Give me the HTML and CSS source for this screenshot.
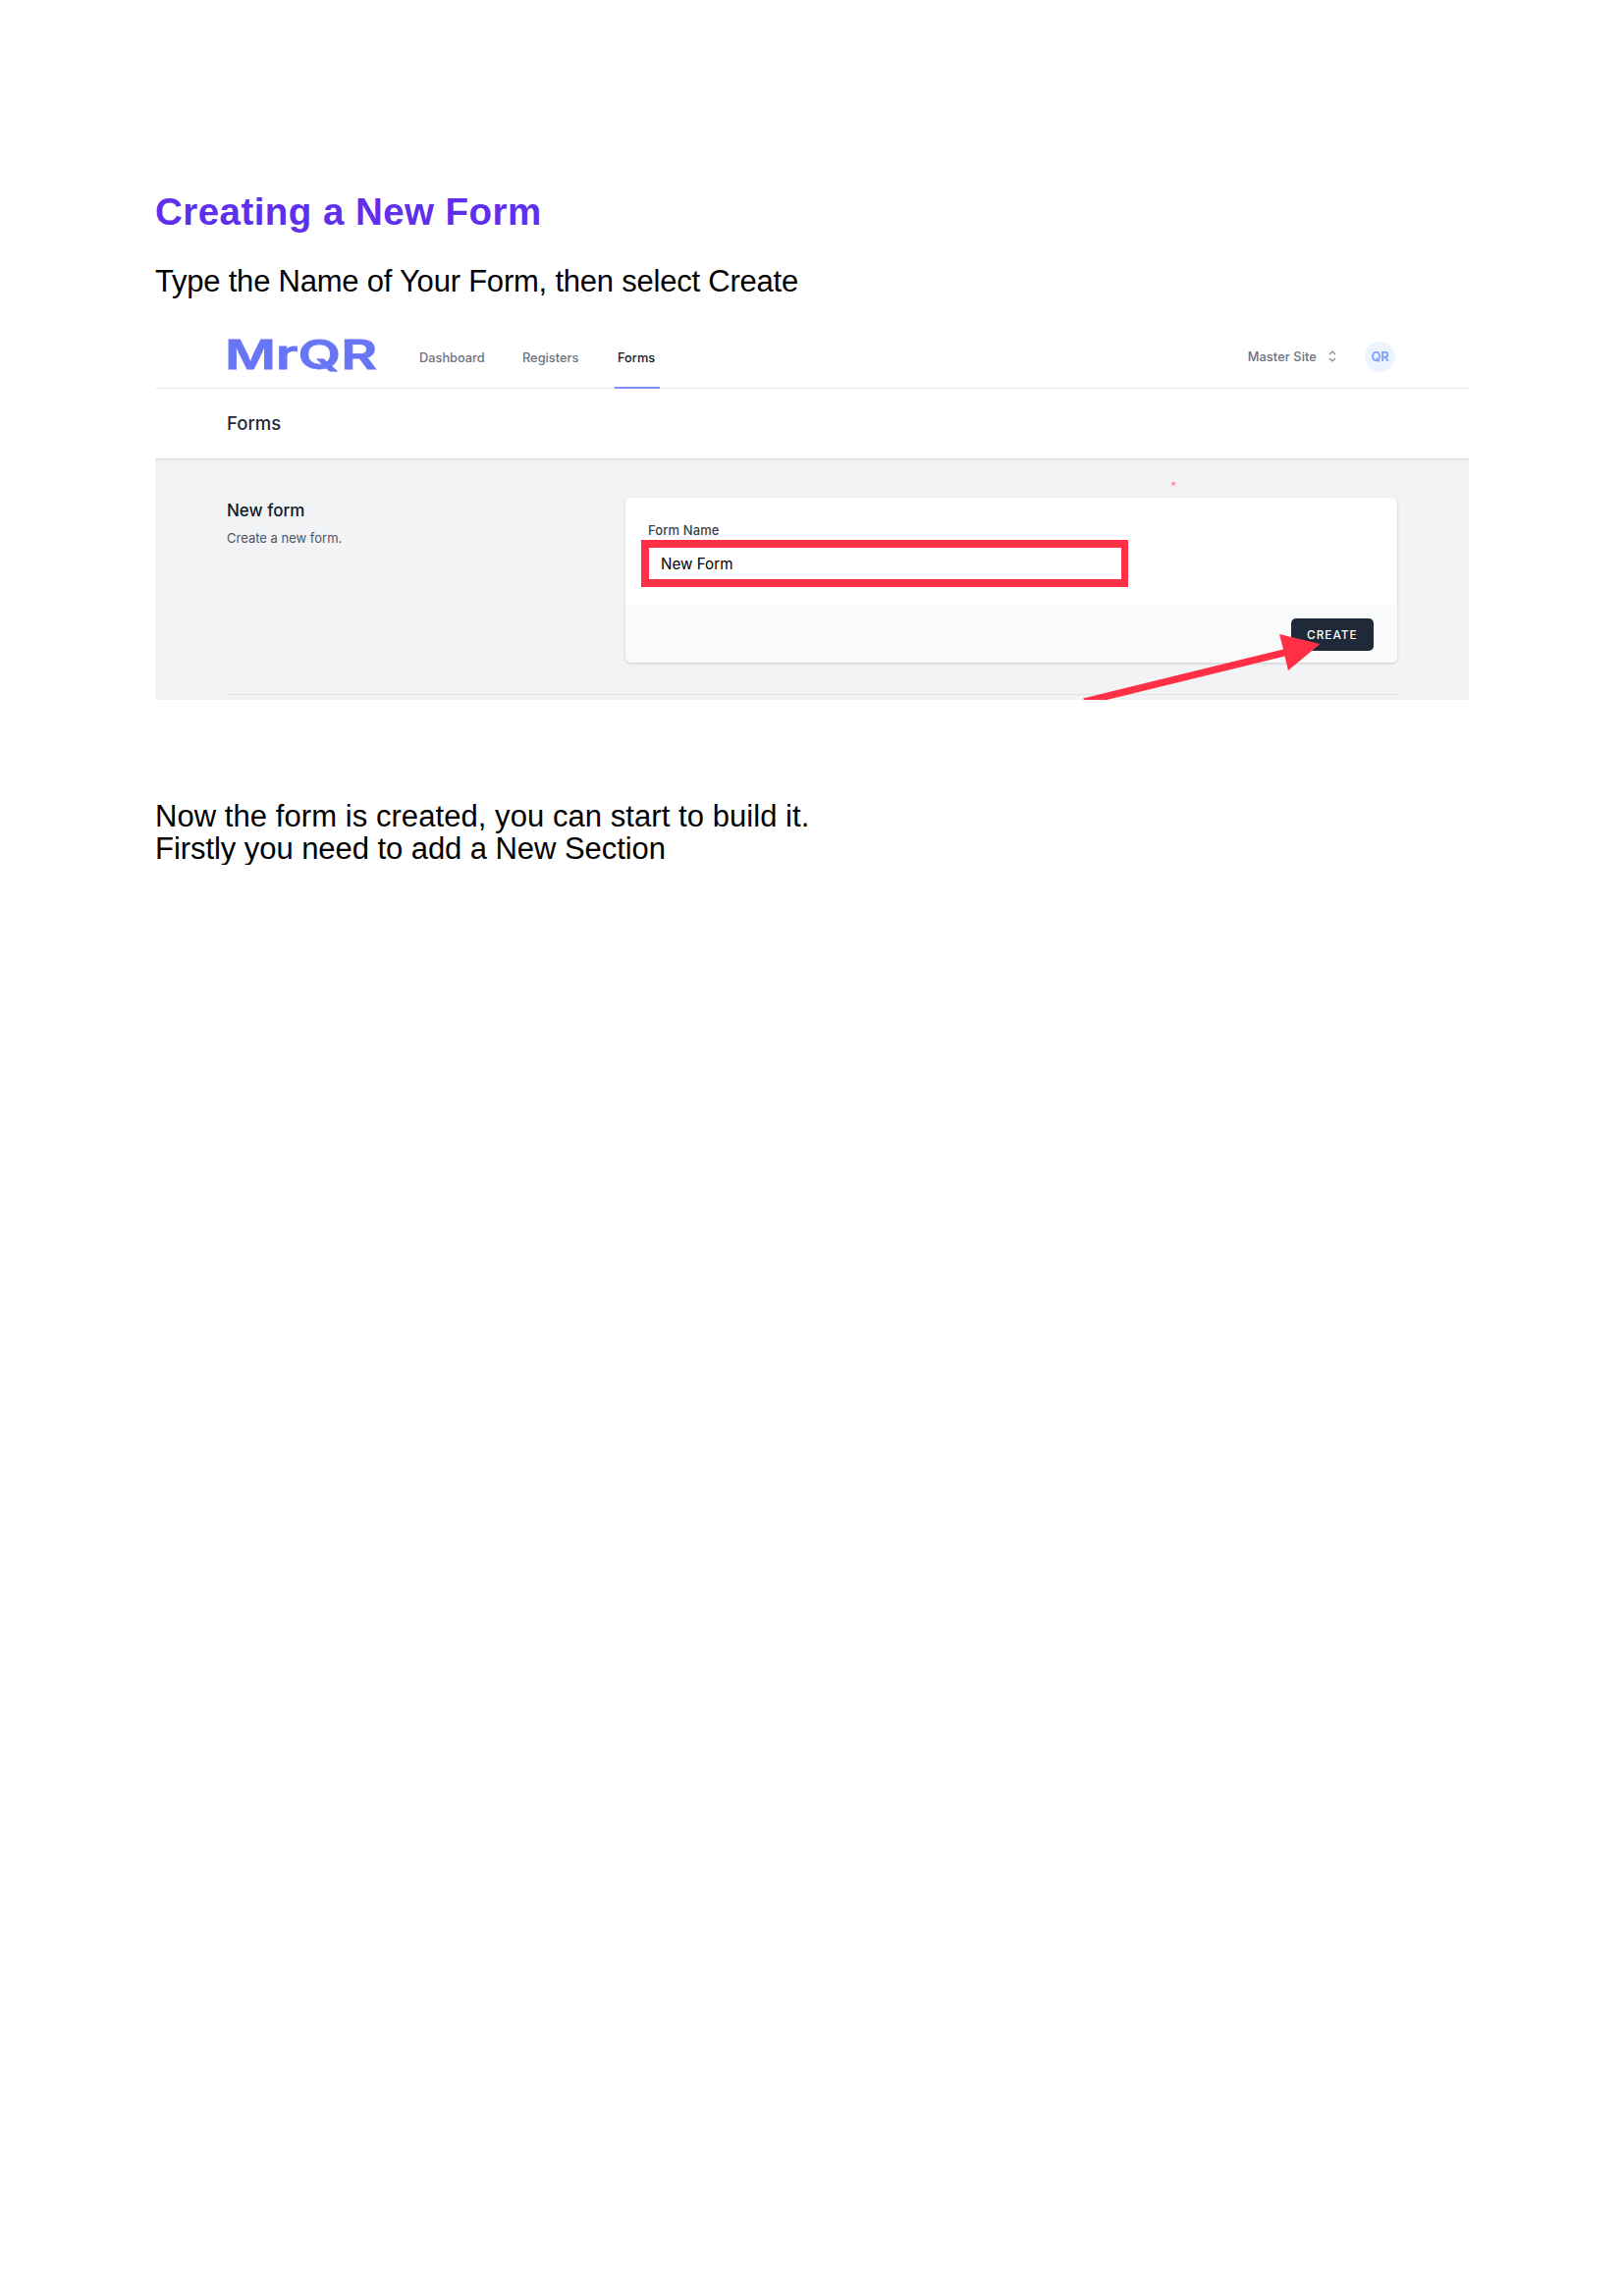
FILE: index.html
```html
<!DOCTYPE html>
<html lang="en">
<head>
<meta charset="utf-8">
<title>Creating a New Form</title>
<link rel="stylesheet" href="styles.css">
</head>
<body>
<main class="page">
  <h1 class="title">Creating a New Form</h1>
  <p class="lead">Type the Name of Your Form, then select Create</p>
  <section class="app">
    <nav class="nav">
      <svg class="logo" width="154" height="50" viewBox="0 0 154 50" role="img" aria-label="MrQR">
        <text class="logo-text" x="-2" y="42" textLength="155" lengthAdjust="spacingAndGlyphs">MrQR</text>
      </svg>
      <div class="links">
        <a class="link link-dashboard">Dashboard</a>
        <a class="link link-registers">Registers</a>
        <a class="link link-active">Forms</a>
      </div>
      <div class="site"><span>Master Site</span>
        <svg width="8" height="12" viewBox="0 0 8 12" fill="none" stroke="#7b818c" stroke-width="1.1"><path d="M1 4 4 1 7 4M1 8 4 11 7 8"/></svg>
      </div>
      <div class="avatar">QR</div>
    </nav>
    <header class="bar"><span>Forms</span></header>
    <div class="content">
      <div class="row">
        <div class="about">
          <h2 class="about-title">New form</h2>
          <p class="about-text">Create a new form.</p>
        </div>
        <div class="card">
          <div class="card-body">
            <label class="label">Form Name</label>
            <div class="field">New Form</div>
          </div>
          <div class="card-foot"><div class="button">CREATE</div></div>
        </div>
      </div>
      <div class="divider"></div>
    </div>
    <svg class="marks" width="1338" height="383" viewBox="158 330 1338 383" fill="#ff2f45">
      <path d="M1103 711.5 1307 661.5 1303 646 1344.500 656 1312 683 1308.500 668.500 1127 713H1104Z"/>
      <path d="M1192.500 491.500 1197 491 1196.500 495 1195 493.500 1192.500 496 1194 493Z" opacity=".55"/>
    </svg>
  </section>
  <p class="note"><span class="note-one">Now the form is created, you can start to build it.</span><br><span class="note-two">Firstly you need to add a New Section</span></p>
</main>
</body>
</html>
```
FILE: styles.css
```css
* { box-sizing: border-box; }
body { margin: 0; background: #fff; font-family: Inter, sans-serif; }
h1, h2, p { margin: 0; font-weight: 400; }
.page { width: 1338px; margin-left: 158px; padding-top: 192px; font-family: "Liberation Sans", Arial, sans-serif; }
.title { height: 48px; font-size: 38.5px; line-height: 48px; font-weight: 700; letter-spacing: .45px; color: #5e30eb; white-space: nowrap; }
.lead, .note { font-size: 31px; line-height: 33px; color: #000; white-space: nowrap; }
.lead { height: 60px; margin-top: 30px; letter-spacing: -.22px; }
.app { position: relative; height: 383px; overflow: hidden; font-family: Inter, sans-serif; color: #1f2937; }
.nav { display: flex; align-items: flex-start; height: 66px; padding: 0 73px; border-bottom: 1px solid #e9eaec; font-size: 12.800px; font-weight: 500; color: #6b7280; }
.logo { display: block; margin-top: 4px; overflow: visible; }
.logo-text { font: 600 41px Inter, sans-serif; fill: #6875f5; stroke: #6875f5; stroke-width: .8px; }
.links { display: flex; margin-left: 39px; height: 66px; }
.link { height: 66px; line-height: 69px; white-space: nowrap; }
.link-dashboard { width: 106px; padding-left: 3px; }
.link-registers { width: 96px; padding-left: 2px; }
.link-active { width: 46px; padding-left: 3px; color: #111827; border-bottom: 2px solid #7f8cf8; }
.site { display: flex; align-items: center; gap: 12px; height: 66px; margin-left: auto; margin-right: 29px; letter-spacing: .1px; }
.avatar { width: 31px; height: 31px; margin: 18px 2px 0 0; border-radius: 50%; background: #ebf4ff; color: #7f9cf5; text-align: center; line-height: 32px; font-weight: 600; }
.bar { height: 72px; padding-left: 73px; border-bottom: 1px solid #d7d9dc; font-size: 18.500px; font-weight: 500; line-height: 71px; }
.content { height: 245px; padding: 39px 73px 0; background: #f2f3f5; box-shadow: inset 0 2px 2px -1px #e5e7e9; }
.row { display: flex; height: 168px; }
.about { width: 406px; }
.about-title { font-size: 17px; line-height: 26px; font-weight: 500; color: #111827; }
.about-text { margin-top: 5px; font-size: 13px; line-height: 20px; color: #4b5563; }
.card { width: 786px; height: 168px; overflow: hidden; border-radius: 6px; background: #fff; box-shadow: 0 1px 3px #0000002b; }
.card-body { height: 110px; padding: 24px 0 0 16px; }
.label { display: block; height: 19px; padding-left: 7px; font-size: 13px; line-height: 19px; font-weight: 500; letter-spacing: .1px; color: #374151; }
.field { width: 496px; height: 48px; padding-left: 12px; border: 8px solid #ff2f45; border-width: 8px 7px 8px 8px; line-height: 33px; font-size: 15.200px; color: #000; background: #fff; }
.card-foot { display: flex; justify-content: flex-end; height: 58px; padding: 13px 24px 0 0; background: #f9fafa; }
.button { width: 84px; height: 33px; padding-left: 16px; border-radius: 5px; background: #1f2937; color: #fff; font-size: 11.800px; font-weight: 500; letter-spacing: 1px; line-height: 34px; }
.divider { height: 1px; margin-top: 32px; background: #dfe1e4; }
.marks { position: absolute; left: 0; top: 0; }
.note { margin-top: 102px; }
.note-one { letter-spacing: .06px; }
.note-two { letter-spacing: -.06px; }
```
